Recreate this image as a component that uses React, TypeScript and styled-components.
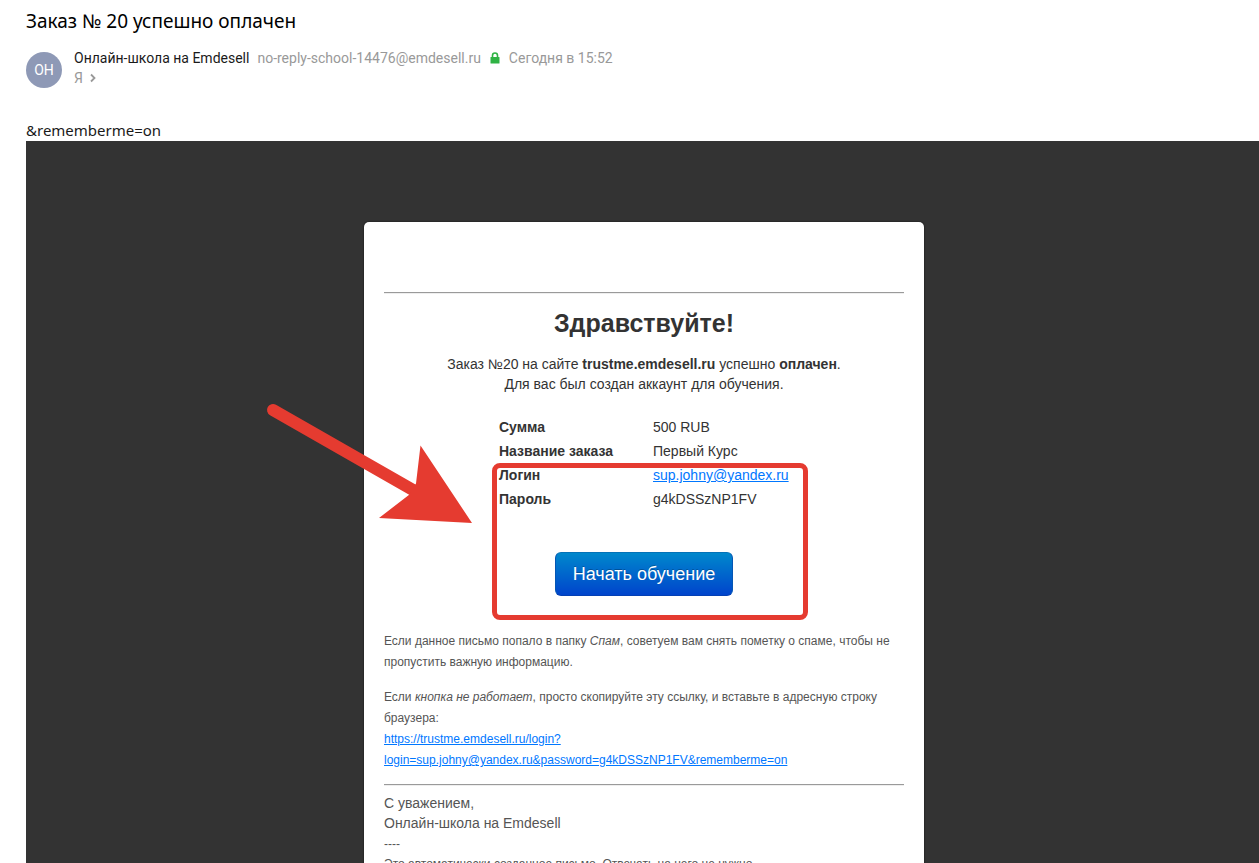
import React from "react";
import styled, { createGlobalStyle } from "styled-components";

const GlobalStyle = createGlobalStyle`
  *, *::before, *::after { box-sizing: border-box; }
  body { margin: 0; background: #fff; }
`;

const Page = styled.main`
  height: 100vh;
  overflow: hidden;
  padding: 9px 0 0 26px;
  font-family: "Noto Sans", "Open Sans", sans-serif;
  color: #1a1a1a;
`;

const Subject = styled.h1`
  margin: 0 0 19px;
  font-size: 19px;
  line-height: 24px;
  font-weight: 400;
  color: #000;
`;

const Header = styled.header`
  display: flex;
  gap: 12px;
  height: 36px;
  font-family: Roboto, "Noto Sans", sans-serif;
  font-size: 14px;
`;

const Avatar = styled.div`
  width: 36px;
  height: 36px;
  border-radius: 50%;
  background: #8e99b6;
  color: #fff;
  line-height: 36px;
  text-align: center;
`;

const SenderInfo = styled.div`
  margin-top: -4px;
  line-height: 20px;
`;

const SenderLine = styled.div`
  display: flex;
  align-items: center;
`;

const Muted = styled.span`
  color: #999;
`;

const SenderAddress = styled(Muted)`
  margin: 0 9px 0 8px;
`;

const LockIcon = styled.svg`
  margin-right: 9px;
`;

const RecipientLine = styled(SenderLine)`
  gap: 6px;
  color: #999;
`;

const LeadingText = styled.div`
  margin-top: 31px;
  font-size: 15px;
  line-height: 22px;
`;

const Letter = styled.div`
  display: flex;
  justify-content: center;
  padding: 81px 0 80px 3px;
  background: #333;
  font-family: "Liberation Sans", Arial, sans-serif;
  font-size: 14px;
  line-height: 20px;
  color: #333;
`;

const Card = styled.article`
  position: relative;
  width: 560px;
  padding: 70px 20px 20px;
  border-radius: 5px;
  background: #fff;
  box-shadow: 0 0 2px rgba(0, 0, 0, 0.7);
`;

const Divider = styled.hr`
  height: 2px;
  margin: 0;
  border: 0;
  border-top: 1px solid #9a9a9a;
  border-bottom: 1px solid #eee;
`;

const Greeting = styled.h2`
  margin: 14px 0 16px;
  font-size: 25px;
  line-height: 30px;
  font-weight: 700;
  text-align: center;
`;

const Intro = styled.p`
  margin: 0;
  text-align: center;
`;

const Details = styled.table`
  width: 290px;
  margin: 21px auto 0;
  border-collapse: collapse;

  th, td { height: 24px; padding: 0; text-align: left; }
  th { width: 154px; font-weight: 700; }
`;

const Link = styled.a`
  color: #0077ff;
  text-decoration: underline;
`;

const StartButton = styled.button`
  display: block;
  height: 44px;
  margin: 41px auto 35px;
  padding: 0 17px;
  border: 1px solid;
  border-color: #0472b8 #0456b4 #0440b4;
  border-radius: 6px;
  background: linear-gradient(#0088cc, #0044cc);
  color: #fff;
  font-family: inherit;
  font-size: 18px;
  line-height: 20px;
  text-shadow: 0 -1px 0 rgba(0, 0, 0, 0.25);
`;

const Note = styled.p`
  margin: 0 0 14px;
  font-size: 12px;
  line-height: 21px;
  color: #555;
`;

const LinkNote = styled(Note)`
  margin-bottom: 13px;
`;

const Signature = styled.footer`
  margin-top: 7px;
  color: #555;
`;

const SmallPrint = styled.div`
  margin-top: 1px;
  font-size: 12px;
`;

const Highlight = styled.div`
  position: absolute;
  top: 241px;
  left: 128px;
  width: 316px;
  height: 157px;
  border: 5px solid #e53b30;
  border-radius: 8px;
  pointer-events: none;
`;

const Arrow = styled.svg`
  position: absolute;
  top: 178px;
  left: -104px;
  pointer-events: none;
`;

const loginUrl =
  "https://trustme.emdesell.ru/login?login=sup.johny@yandex.ru&password=g4kDSSzNP1FV&rememberme=on";

export default function App() {
  return (
    <>
      <GlobalStyle />
      <Page>
        <Subject>Заказ № 20 успешно оплачен</Subject>
        <Header>
          <Avatar>ОН</Avatar>
          <SenderInfo>
            <SenderLine>
              <span>Онлайн-школа на Emdesell</span>
              <SenderAddress>no-reply-school-14476@emdesell.ru</SenderAddress>
              <LockIcon width="10" height="12" viewBox="0 0 10 12" aria-hidden="true">
                <path d="M2.500 6V3.500a2.500 2.500 0 0 1 5 0V6" fill="none" stroke="#2fb344" strokeWidth="1.6" />
                <rect x="0.5" y="5" width="9" height="6.5" rx="0.6" fill="#2fb344" />
              </LockIcon>
              <Muted>Сегодня в 15:52</Muted>
            </SenderLine>
            <RecipientLine>
              <span>Я</span>
              <svg width="8" height="10" viewBox="0 0 8 10" aria-hidden="true">
                <path d="M2 1.500 5.500 5 2 8.500" fill="none" stroke="#999" strokeWidth="1.8" />
              </svg>
            </RecipientLine>
          </SenderInfo>
        </Header>
        <LeadingText>&amp;rememberme=on</LeadingText>
        <Letter>
          <Card>
            <Divider />
            <Greeting>Здравствуйте!</Greeting>
            <Intro>
              Заказ №20 на сайте <b>trustme.emdesell.ru</b> успешно <b>оплачен</b>.
              <br />
              Для вас был создан аккаунт для обучения.
            </Intro>
            <Details>
              <tbody>
                <tr>
                  <th scope="row">Сумма</th>
                  <td>500 RUB</td>
                </tr>
                <tr>
                  <th scope="row">Название заказа</th>
                  <td>Первый Курс</td>
                </tr>
                <tr>
                  <th scope="row">Логин</th>
                  <td>
                    <Link href="mailto:sup.johny@yandex.ru">sup.johny@yandex.ru</Link>
                  </td>
                </tr>
                <tr>
                  <th scope="row">Пароль</th>
                  <td>g4kDSSzNP1FV</td>
                </tr>
              </tbody>
            </Details>
            <StartButton type="button">Начать обучение</StartButton>
            <Note>
              Если данное письмо попало в папку <i>Спам</i>, советуем вам снять пометку о спаме,
              чтобы не пропустить важную информацию.
            </Note>
            <LinkNote>
              Если <i>кнопка не работает</i>, просто скопируйте эту ссылку, и вставьте в адресную
              строку браузера:
              <br />
              <Link href={loginUrl}>
                https://trustme.emdesell.ru/login?
                <wbr />
                login=sup.johny@yandex.ru&amp;password=g4kDSSzNP1FV&amp;rememberme=on
              </Link>
            </LinkNote>
            <Divider />
            <Signature>
              С уважением,
              <br />
              Онлайн-школа на Emdesell
              <SmallPrint>
                ----
                <br />
                Это автоматически созданное письмо. Отвечать на него не нужно.
              </SmallPrint>
            </Signature>
            <Highlight />
            <Arrow width="216" height="126" viewBox="260 400 216 126" aria-hidden="true">
              <path d="M273 410 420 494" stroke="#e53b30" strokeWidth="12" strokeLinecap="round" />
              <path d="M420.500 445.500 472 523 379 518 409.500 494.500 416 483.500Z" fill="#e53b30" />
            </Arrow>
          </Card>
        </Letter>
      </Page>
    </>
  );
}
